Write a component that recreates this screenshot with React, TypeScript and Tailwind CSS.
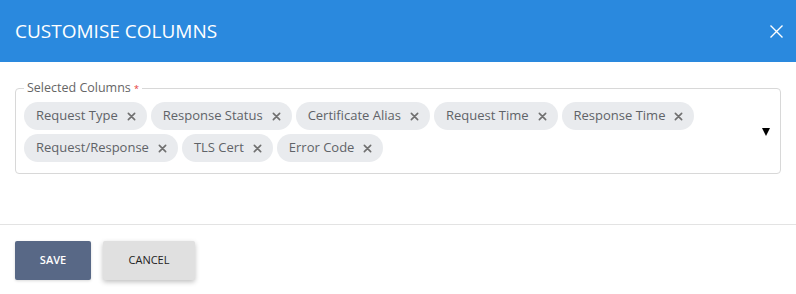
import React from 'react'

const columns = [
  'Request Type',
  'Response Status',
  'Certificate Alias',
  'Request Time',
  'Response Time',
  'Request/Response',
  'TLS Cert',
  'Error Code'
]

const Chip: React.FC<{ label: string }> = ({ label }) => (
  <div className="flex h-[28px] items-center rounded-full bg-[#e9ebee] pl-[12px] pr-[11px] text-[13px] text-[#5f6368]">
    <span>{label}</span>
    <svg className="ml-[9px]" width="9" height="9" viewBox="0 0 10 10">
      <path d="M1.5 1.5 L8.5 8.5 M8.5 1.5 L1.5 8.5" stroke="#707070" strokeWidth="1.8" strokeLinecap="round" />
    </svg>
  </div>
)

export default function App() {
  return (
    <div className="h-[294px] w-[796px] bg-white font-['Open_Sans',sans-serif]">
      {/* Header */}
      <div className="flex h-[62px] items-center justify-between bg-[#2a89de] pl-[15px] pr-[13px]">
        <h2 className="text-[19px] text-white">CUSTOMISE COLUMNS</h2>
        <svg width="13" height="13" viewBox="0 0 13 13">
          <path d="M0.5 0.5 L12.5 12.5 M12.5 0.5 L0.5 12.5" stroke="#ffffff" strokeWidth="1.4" />
        </svg>
      </div>

      {/* Body */}
      <div className="h-[162px] px-[15px] pt-[18px]">
        <fieldset className="rounded-[4px] border border-[#d8d8d8] pb-[11px] pl-[8px] pr-[10px] pt-[5px]">
          <legend className="px-[3px] text-[12.5px] leading-[16px] text-[#666]">
            Selected Columns <span className="text-[9px] text-[#e53935]">*</span>
          </legend>
          <div className="flex items-center">
            <div className="flex flex-1 flex-wrap gap-[4px]">
              {columns.map((c) => (
                <Chip key={c} label={c} />
              ))}
            </div>
            <svg width="8" height="8" viewBox="0 0 8 8">
              <path d="M0 0 L8 0 L4 8 Z" fill="#000" />
            </svg>
          </div>
        </fieldset>
      </div>

      {/* Footer */}
      <div className="flex gap-[12px] border-t border-[#e3e3e3] px-[15px] pt-[16px]">
        <button className="h-[39px] w-[76px] rounded-[2px] bg-[#586886] text-[11px] font-semibold text-white shadow-[0_1px_3px_rgba(0,0,0,0.15)]">
          SAVE
        </button>
        <button className="h-[39px] w-[92px] rounded-[2px] bg-[#e0e0e0] text-[11px] text-[#222] shadow-[0_2px_5px_rgba(0,0,0,0.25)]">
          CANCEL
        </button>
      </div>
    </div>
  )
}
